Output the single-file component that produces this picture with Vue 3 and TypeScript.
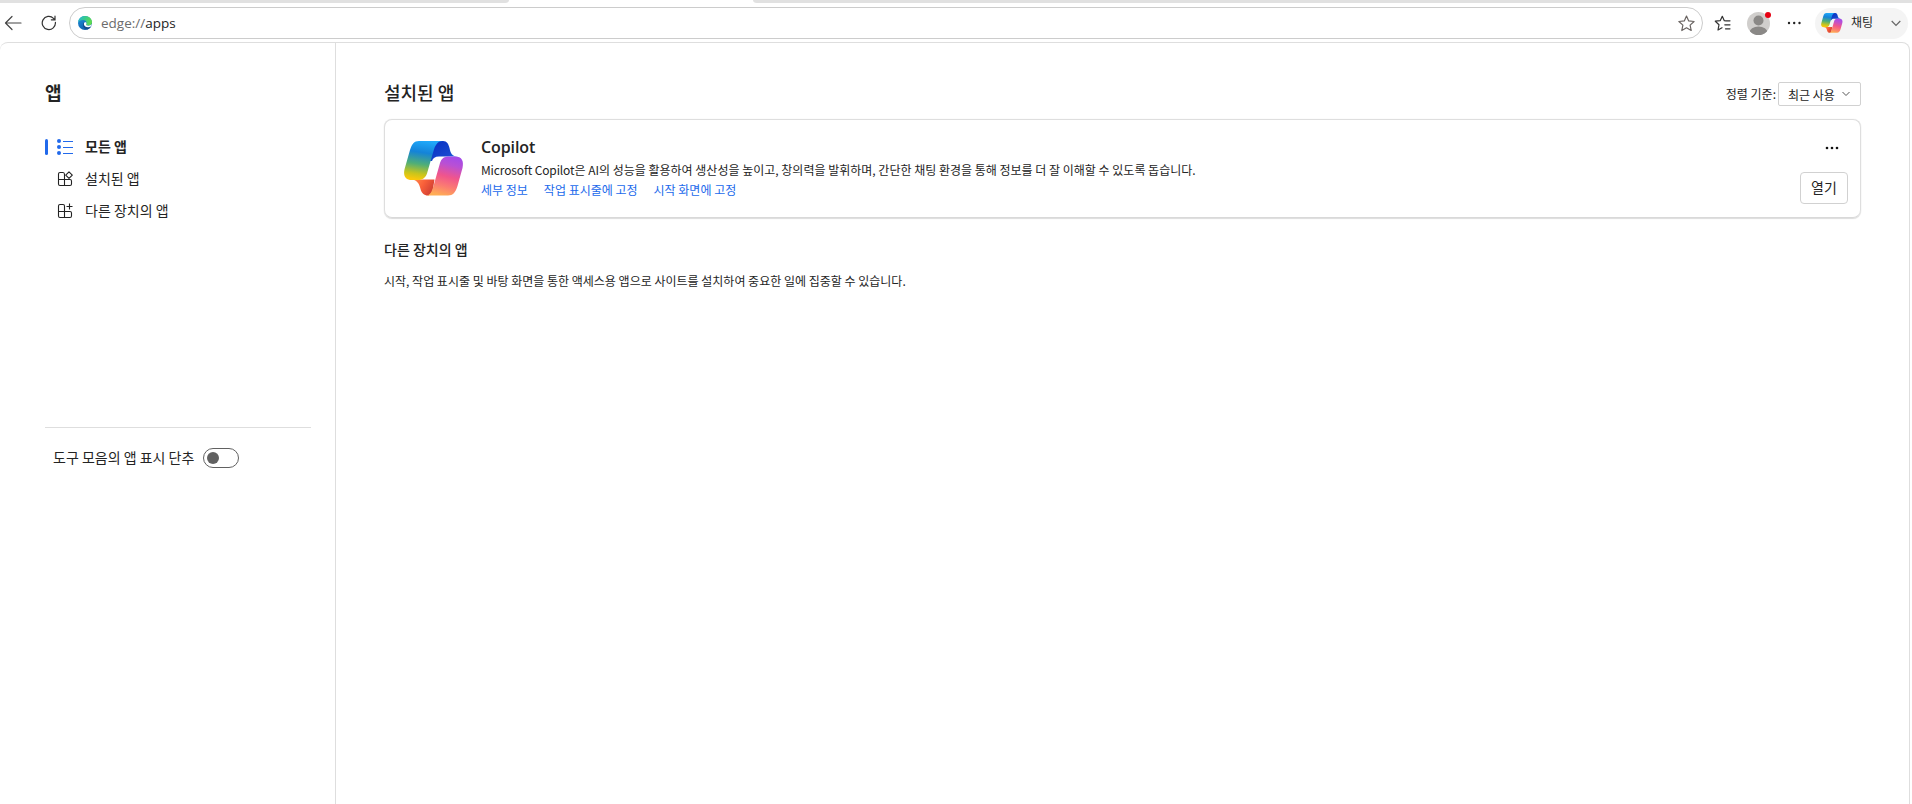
<script setup lang="ts">
interface NavItem {
  id: string
  label: string
  icon: 'list' | 'installed' | 'device'
}

const navItems: NavItem[] = [
  { id: 'all', label: '모든 앱', icon: 'list' },
  { id: 'installed', label: '설치된 앱', icon: 'installed' },
  { id: 'other', label: '다른 장치의 앱', icon: 'device' },
]
const activeId = 'all'
const links: string[] = ['세부 정보', '작업 표시줄에 고정', '시작 화면에 고정']
</script>

<template>
  <div class="browser">
    <svg width="0" height="0" class="defs">
      <defs>
        <linearGradient id="cpLeft" x1="0.55" y1="0" x2="0.4" y2="1">
          <stop offset="0" stop-color="#20a9fa" />
          <stop offset="0.3" stop-color="#1483d8" />
          <stop offset="0.6" stop-color="#4fae78" />
          <stop offset="0.85" stop-color="#c9c51c" />
          <stop offset="1" stop-color="#fbc80c" />
        </linearGradient>
        <linearGradient id="cpTop" x1="0.2" y1="0.2" x2="1" y2="1">
          <stop offset="0" stop-color="#0b35c4" />
          <stop offset="0.6" stop-color="#1648cf" />
          <stop offset="1" stop-color="#1f86e8" />
        </linearGradient>
        <linearGradient id="cpRight" x1="0.65" y1="0" x2="0.4" y2="1">
          <stop offset="0" stop-color="#a54be8" />
          <stop offset="0.2" stop-color="#b950d4" />
          <stop offset="0.5" stop-color="#f0558c" />
          <stop offset="0.75" stop-color="#fb7b72" />
          <stop offset="1" stop-color="#ffad55" />
        </linearGradient>
        <linearGradient id="cpBottom" x1="0" y1="0.1" x2="1" y2="0.5">
          <stop offset="0" stop-color="#ff9050" />
          <stop offset="0.5" stop-color="#fa613a" />
          <stop offset="1" stop-color="#d13f33" />
        </linearGradient>
        <linearGradient id="edgeGreen" x1="0" y1="0.2" x2="1" y2="0.5">
          <stop offset="0" stop-color="#27b6d8" />
          <stop offset="0.45" stop-color="#36c98f" />
          <stop offset="1" stop-color="#5fdc4c" />
        </linearGradient>
        <linearGradient id="edgeBlue" x1="0" y1="0" x2="0.6" y2="1">
          <stop offset="0" stop-color="#2093dc" />
          <stop offset="1" stop-color="#0d5cab" />
        </linearGradient>
        <symbol id="copilot" viewBox="0 0 60 55">
          <path d="M31 0H39C43 0 44.500 3 45.500 7C46.500 12 48 15.500 54 15.500H35C31 15.500 29 17 28 20L24 20V0Z" fill="url(#cpTop)" />
          <path d="M7 38.500H30.500L29 48C28 52 26 54.500 24 54.500C20 54.500 17.500 52 16.500 48C15.500 43 13 38.500 7 38.500Z" fill="url(#cpBottom)" />
          <path d="M15 0H39C33 0 31 5 29.500 10L23 32.500C21.500 36.500 19 39 14 39H8C1 39-1 34 .6 28L6 9C8 3 10 0 15 0Z" fill="url(#cpLeft)" />
          <path d="M45 15.500H51C58 15.500 60 20 58.500 27L53.500 45C51.500 51.500 49 54.500 44 54.500H22C26.500 54.500 28 50 29.500 45L36 22C37.500 17.500 40 15.500 45 15.500Z" fill="url(#cpRight)" />
        </symbol>
      </defs>
    </svg>

    <div class="tabstrip">
      <div class="strip-left"></div>
      <div class="strip-right"></div>
    </div>

    <header class="toolbar">
      <svg class="back" width="18" height="16" viewBox="0 0 18 16" fill="none" stroke="#454545" stroke-width="1.2">
        <path d="M8 1.500 1.500 8 8 14.500M1.500 8H17" stroke-linecap="round" stroke-linejoin="round" />
      </svg>
      <svg class="reload" width="16" height="16" viewBox="0 0 16 16" fill="none" stroke="#333" stroke-width="1.200" stroke-linecap="round">
        <path d="M14.400 7.300A6.600 6.600 0 1 1 12.500 3.300L14 4.800M14 1.200V4.800H10.300" />
      </svg>
      <div class="address">
        <svg class="edge" width="14" height="14" viewBox="0 0 14 14">
          <circle cx="7" cy="7" r="7" fill="url(#edgeBlue)" />
          <path d="M0 6.500C.4 2.500 3.400 0 7 0C11 0 14 2.800 14 6C14 8.300 12.400 9.600 10.600 9.600C9 9.600 8 9 8.300 8.300C9 7.500 8.600 4 5.200 4C2.600 4 .8 5.200 0 6.500Z" fill="url(#edgeGreen)" />
          <path d="M5.600 6.400C3.800 9 6 13.400 9.400 13.500C11 12.900 12.300 11.900 13 10.700C10.800 12 6.700 11.200 6.300 8Z" fill="#124a8c" />
          <path d="M8.400 6.700C7.300 5.900 5.800 6.500 5.900 8.200C6.200 10.800 9.600 12 12.700 10.600C13.500 10 13.700 9.200 13.900 8.300C12.500 9.700 9.800 10 8.400 9.200C7.900 8.700 8.700 8 8.400 6.700Z" fill="#fff" />
        </svg>
        <span class="url"><span class="scheme">edge://</span>apps</span>
        <svg class="star" width="17" height="17" viewBox="0 0 17 17" fill="none" stroke="#6a6462" stroke-width="1.200" stroke-linejoin="round">
          <path d="M8.500 1 10.700 5.900 16.100 6.500 12.100 10.100 13.200 15.500 8.500 12.800 3.800 15.500 4.900 10.100.9 6.500 6.300 5.900Z" />
        </svg>
      </div>
      <svg class="favorites" width="18" height="17" viewBox="0 0 18 17" fill="none" stroke="#333" stroke-width="1.200" stroke-linecap="round" stroke-linejoin="round">
        <path d="M12 5.800 10.300 5.700 8.300 1.300 6.300 5.600 1.300 6.200 5 9.700 4 15 8 12.700M11.500 5.800H16M10.800 9.800H16M11.500 13.800H16" />
      </svg>
      <div class="avatar">
        <svg width="23" height="23" viewBox="0 0 23 23">
          <clipPath id="avatarClip"><circle cx="11.500" cy="11.500" r="11.500" /></clipPath>
          <g clip-path="url(#avatarClip)">
            <rect width="23" height="23" fill="#d0cecc" />
            <circle cx="11.500" cy="8.500" r="5" fill="#8a8886" />
            <ellipse cx="11.500" cy="20.500" rx="9" ry="6" fill="#8a8886" />
          </g>
        </svg>
        <i class="badge"></i>
      </div>
      <svg class="menu" width="14" height="4" viewBox="0 0 14 4" fill="#222">
        <circle cx="2" cy="2" r="1.200" /><circle cx="7.200" cy="2" r="1.200" /><circle cx="12.500" cy="2" r="1.200" />
      </svg>
      <div class="chat">
        <svg width="22" height="20"><use href="#copilot" width="22" height="20" /></svg>
        <span class="chat-label">채팅</span>
        <svg class="chat-chevron" width="10" height="7" viewBox="0 0 10 7" fill="none" stroke="#666" stroke-width="1.200">
          <path d="M.7 1 5 5.400 9.300 1" />
        </svg>
      </div>
    </header>

    <div class="page">
      <aside class="sidebar">
        <h1>앱</h1>
        <nav>
          <a v-for="item in navItems" :key="item.id" class="nav-item" :class="{ active: item.id === activeId }">
            <i class="marker"></i>
            <svg v-if="item.icon === 'list'" width="16" height="16" viewBox="0 0 16 16" fill="#2169eb">
              <circle cx="2" cy="2" r="2" /><circle cx="2" cy="8" r="2" /><circle cx="2" cy="14" r="2" />
              <path d="M6 2H16V3H6ZM6 8H16V9H6ZM6 14H16V15H6Z" />
            </svg>
            <svg v-else-if="item.icon === 'installed'" width="16" height="16" viewBox="0 0 16 16" fill="none" stroke="#222" stroke-width="1.100" stroke-linejoin="round">
              <path d="M7.500 8.500V3.500Q7.500 1.500 6 1.500H3Q1.500 1.500 1.500 3V13Q1.500 14.500 3 14.500H13Q14.500 14.500 14.500 13V10Q14.500 8.500 13 8.500H1.500M7.500 8.500V14.500" />
              <path d="M12 .8 15.300 4.100 12 7.400 8.700 4.100Z" />
            </svg>
            <svg v-else width="16" height="16" viewBox="0 0 16 16" fill="none" stroke="#222" stroke-width="1.100">
              <path d="M7.500 8.500V3Q7.500 1.500 6 1.500H3Q1.500 1.500 1.500 3V13Q1.500 14.500 3 14.500H13Q14.500 14.500 14.500 13V10Q14.500 8.500 13 8.500H1.500M7.500 8.500V14.500M12.500 .5V6.500M9.500 3.500H15.500" />
            </svg>
            <span class="nav-label">{{ item.label }}</span>
          </a>
        </nav>
        <div class="toggle-row">
          <span class="toggle-label">도구 모음의 앱 표시 단추</span>
          <span class="toggle" role="switch" aria-checked="false"><i></i></span>
        </div>
      </aside>

      <main class="content">
        <div class="heading">
          <h2>설치된 앱</h2>
          <div class="sort">
            <span class="sort-label">정렬 기준:</span>
            <div class="select">
              <span>최근 사용</span>
              <svg width="8" height="6" viewBox="0 0 8 6" fill="none" stroke="#555" stroke-width="1">
                <path d="M.5 1 4 4.500 7.500 1" />
              </svg>
            </div>
          </div>
        </div>

        <section class="card">
          <svg class="logo" width="60" height="55"><use href="#copilot" width="60" height="55" /></svg>
          <div class="info">
            <h3>Copilot</h3>
            <p><span class="latin">Microsoft Copilot</span>은 AI의 성능을 활용하여 생산성을 높이고, 창의력을 발휘하며, 간단한 채팅 환경을 통해 정보를 더 잘 이해할 수 있도록 돕습니다.</p>
            <div class="links"><a v-for="link in links" :key="link">{{ link }}</a></div>
          </div>
          <div class="actions">
            <svg class="more" width="14" height="4" viewBox="0 0 14 4" fill="#111">
              <circle cx="2" cy="2" r="1.300" /><circle cx="7" cy="2" r="1.300" /><circle cx="12" cy="2" r="1.300" />
            </svg>
            <button type="button">열기</button>
          </div>
        </section>

        <h4>다른 장치의 앱</h4>
        <p class="note">시작, 작업 표시줄 및 바탕 화면을 통한 액세스용 앱으로 사이트를 설치하여 중요한 일에 집중할 수 있습니다.</p>
      </main>
    </div>
  </div>
</template>

<style>
body { background: #fff; overflow: hidden; }
</style>

<style scoped>
* { box-sizing: border-box; }
h1, h2, h3, h4, p { margin: 0; }
.browser { width: 1912px; height: 804px; overflow: hidden; background: #fff; color: #242424; font-family: "Noto Sans CJK KR", "Noto Sans", sans-serif; }
.defs { position: absolute; }
svg { display: block; flex: none; }
.tabstrip { display: flex; justify-content: space-between; height: 3px; }
.strip-left { width: 509px; background: #e1e1e1; border-bottom-right-radius: 4px 3px; }
.strip-right { width: 1159px; background: #e1e1e1; border-bottom-left-radius: 4px 3px; }
.toolbar { display: flex; align-items: center; height: 39px; padding: 1px 4px 0; }
.reload { margin-left: 19px; }
.address { display: flex; align-items: center; width: 1635px; height: 32px; margin-left: 12px; padding: 0 7px 0 8px; border: 1px solid #ccc; border-radius: 16px; }
.url { margin-left: 9px; font: 13.5px/18px "Open Sans", sans-serif; flex: 1; }
.scheme { color: #6c6c6c; }
.favorites { margin-left: 11px; }
.avatar { position: relative; margin-left: 15px; }
.badge { position: absolute; right: -1px; top: 0; width: 6px; height: 6px; border-radius: 50%; background: #e60012; }
.menu { margin-left: 17px; }
.chat { display: flex; align-items: center; width: 93px; height: 31px; margin-left: 14px; padding-left: 6px; border-radius: 16px; background: #f4f4f4; }
.chat-label { margin-left: 8px; padding-bottom: 2px; font-size: 12px; line-height: 18px; }
.chat-chevron { margin-left: 18px; margin-top: 1px; }

.page { display: flex; width: 1910px; height: 770px; border: 1px solid #dedede; border-left: 0; border-radius: 8px 8px 0 0; }
.sidebar { width: 336px; padding: 35px 24px 0 45px; border-right: 1px solid #dedede; }
h1 { font-size: 18px; line-height: 28px; font-weight: 600; }
nav { margin-top: 25px; }
.nav-item { display: flex; align-items: center; height: 32px; font-size: 14px; line-height: 20px; }
.nav-item svg { margin: 0 12px 0 9px; }
.nav-label, .toggle-label, .sort-label { padding-bottom: 2px; }
.nav-item.active { font-weight: 700; }
.marker { width: 3px; height: 16px; border-radius: 2px; }
.active .marker { background: #2169eb; }
.toggle-row { display: flex; align-items: center; height: 61px; margin-top: 200px; padding-left: 8px; border-top: 1px solid #dedede; font-size: 14px; }
.toggle { display: flex; align-items: center; width: 36px; height: 20px; margin-left: 9px; padding-left: 3px; border: 1px solid #616161; border-radius: 10px; }
.toggle i { width: 12px; height: 12px; border-radius: 50%; background: #616161; }

.content { flex: 1; padding: 35px 48px 0 48px; }
.heading { display: flex; justify-content: space-between; height: 41px; }
h2 { font-size: 18px; line-height: 28px; font-weight: 500; }
.sort { display: flex; align-items: center; height: 24px; margin-top: 4px; gap: 2px; font-size: 12px; }
.select { display: flex; align-items: center; justify-content: space-between; width: 83px; height: 24px; padding: 0 10px 0 9px; border: 1px solid #d1d1d1; border-radius: 2px; }
.card { display: flex; height: 99px; padding: 21px 12px 0 19px; border: 1px solid #dedede; border-bottom-color: #d9d9d9; border-radius: 8px; box-shadow: 0 1px 1px #dcdcdc, 0 0 1px #ddd; }
.logo { margin-right: 17px; }
.info { flex: 1; margin-top: -5px; }
h3 { font: 600 16px/22px "Open Sans", sans-serif; letter-spacing: -0.1px; }
.info p { margin-top: 3px; font-size: 12px; line-height: 18px; }
.latin { letter-spacing: -0.13px; }
.links { display: flex; gap: 16px; margin-top: 2px; font-size: 12px; line-height: 18px; color: #2169eb; }
.actions { display: flex; flex-direction: column; align-items: flex-end; }
.more { margin: 5px 9px 0 0; }
button { width: 48px; height: 32px; margin-top: 22px; padding: 0 0 2px; border: 1px solid #d1d1d1; border-radius: 4px; background: #fff; color: #242424; font: 14px/20px "Noto Sans CJK KR", sans-serif; }
h4 { margin-top: 21px; font-size: 14px; line-height: 20px; font-weight: 500; }
.note { margin-top: 13px; font-size: 12px; line-height: 18px; }
</style>
